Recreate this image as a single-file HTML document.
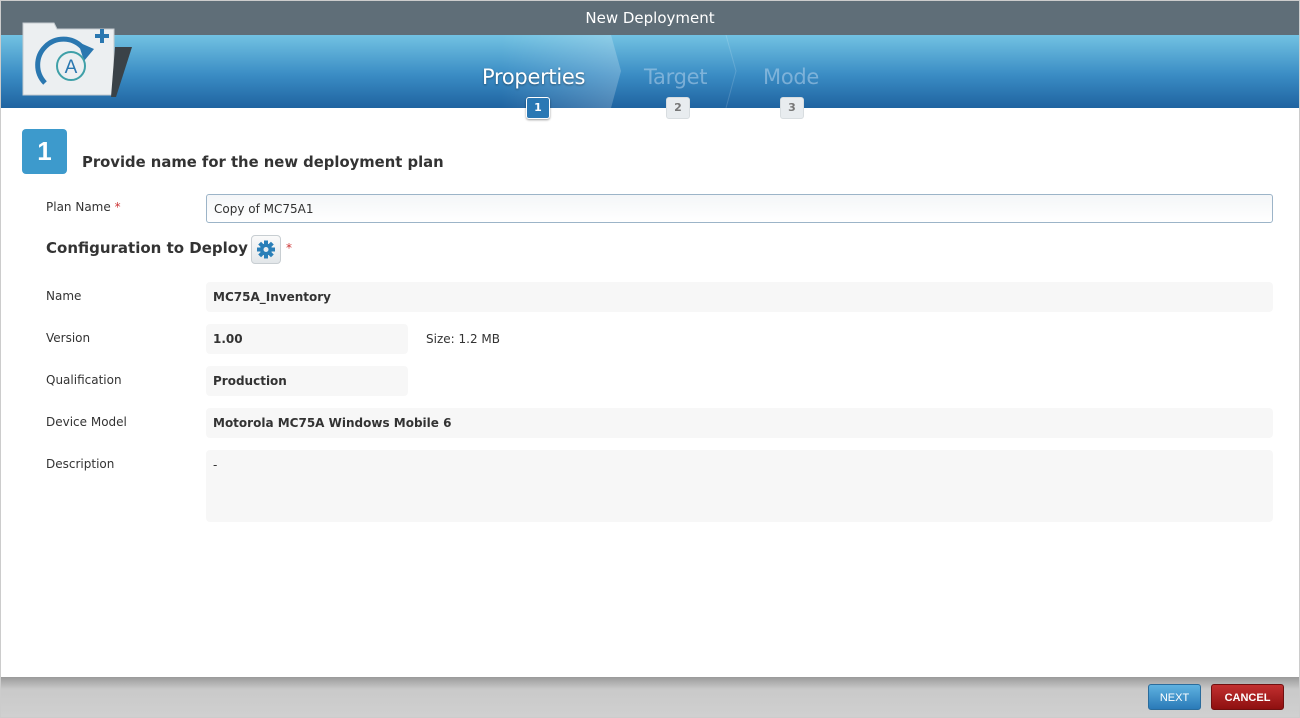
<!DOCTYPE html>
<html><head><meta charset="utf-8"><style>
*{box-sizing:border-box;margin:0;padding:0}
body{width:1300px;height:718px;overflow:hidden;background:#fff;font-family:"DejaVu Sans","Liberation Sans",sans-serif;position:relative}
.frame{position:absolute;left:0;top:0;width:1300px;height:718px;border:1px solid #ccc}
.title{position:absolute;left:1px;top:1px;width:1298px;height:34px;background:#5f6e78;color:#fff;text-align:center;font-size:15px;line-height:34px}
.banner{position:absolute;left:1px;top:35px;width:1298px;height:73px;background:linear-gradient(#72c2e2,#3a8cc4 55%,#1f63a0)}
.step{position:absolute;top:30px;font-size:21px;color:#fff;text-shadow:0 1px 2px rgba(0,0,0,.4);letter-spacing:-0.3px}
.step.off{color:rgba(180,210,235,.55);text-shadow:none}
.num{position:absolute;top:97px;width:24px;height:22px;border-radius:3px;font-size:11px;text-align:center;line-height:20px;font-weight:bold}
.num.on{background:#2a78b4;color:#fff;border:1px solid #fff;box-shadow:0 1px 2px rgba(0,0,0,.4)}
.num.off{background:#e8ecef;color:#777;border:1px solid #d8dde0}
.lbl{position:absolute;left:46px;font-size:12px;color:#333}
.val{position:absolute;left:206px;height:30px;background:#f7f7f7;border-radius:4px;font-size:12px;font-weight:bold;color:#333;padding:8px 7px}
.req{color:#c33}
.footer{position:absolute;left:1px;top:677px;width:1298px;height:40px;background:linear-gradient(#9a9a9a,#c9c9c9 30%,#d0d0d0)}
.btn{position:absolute;top:684px;height:26px;border-radius:3px;color:#fff;font-size:11px;text-align:center;line-height:26px;font-family:"Liberation Sans",sans-serif}
</style></head><body>
<div class="frame"></div>
<div class="title">New Deployment</div>
<div class="banner">
 <svg style="position:absolute;left:15px;top:-18px" width="120" height="82" viewBox="0 0 120 82">
  <path d="M7 6 H38 L41 12 H98 V78 H7 Z" fill="#eceff1" stroke="#c5cbcf"/>
  <path d="M99 30 H116 L100 80 H95 Z" fill="#3a4248"/>
  <path d="M29 66 A24 24 0 1 1 66 30" fill="none" stroke="#2a77b0" stroke-width="5"/>
  <path d="M62 25 L78 32 L68 44 Z" fill="#2a77b0"/>
  <circle cx="55" cy="49" r="14" fill="none" stroke="#3fa0a8" stroke-width="2"/>
  <text x="55" y="56" font-size="19" fill="#2a77b0" text-anchor="middle" font-family="Liberation Sans">A</text>
  <path d="M86 12 V26 M79 19 H93" stroke="#2a77b0" stroke-width="4"/>
 </svg>
 <svg style="position:absolute;left:440px;top:0" width="400" height="73"><defs><linearGradient id="g" x1="0" x2="1"><stop offset="0" stop-color="#fff" stop-opacity="0"/><stop offset="1" stop-color="#fff" stop-opacity=".22"/></linearGradient></defs><path d="M60 0 H170 L180 36 L170 73 H60Z" fill="url(#g)"/><path d="M285 0 L295 36 L285 73" stroke="rgba(255,255,255,.15)" fill="none"/></svg>
 <div class="step" style="left:481px">Properties</div>
 <div class="step off" style="left:643px">Target</div>
 <div class="step off" style="left:762px">Mode</div>
</div>
<div class="num on" style="left:526px">1</div>
<div class="num off" style="left:666px">2</div>
<div class="num off" style="left:780px">3</div>

<div style="position:absolute;left:22px;top:129px;width:45px;height:45px;background:#3d9acc;border-radius:4px;color:#fff;font-size:26px;text-align:center;line-height:45px;font-family:'Liberation Sans',sans-serif;font-weight:bold">1</div>
<div style="position:absolute;left:82px;top:154px;font-size:14.8px;color:#333;font-weight:bold">Provide name for the new deployment plan</div>

<div class="lbl" style="top:200px">Plan Name <span class="req">*</span></div>
<div style="position:absolute;left:206px;top:194px;width:1067px;height:29px;border:1px solid #9cb4c8;border-radius:3px;background:linear-gradient(#f4f6f8,#fff);font-size:12px;color:#333;padding:7px 7px">Copy of MC75A1</div>

<div style="position:absolute;left:46px;top:239px;font-size:15px;font-weight:bold;color:#333">Configuration to Deploy</div>
<div style="position:absolute;left:251px;top:235px;width:30px;height:29px;border:1px solid #c8ced2;border-radius:4px;background:linear-gradient(#fafafa,#e2e6e9)"><svg width="28" height="27" viewBox="0 0 28 27"><g transform="translate(14 13.5)" fill="#2a7fb8"><circle r="6"/><rect x="-2" y="-9" width="4" height="18"/><rect x="-2" y="-9" width="4" height="18" transform="rotate(45)"/><rect x="-2" y="-9" width="4" height="18" transform="rotate(90)"/><rect x="-2" y="-9" width="4" height="18" transform="rotate(135)"/><circle r="2.5" fill="#e8ecef"/></g></svg></div>
<div style="position:absolute;left:286px;top:241px;font-size:12px" class="req">*</div>

<div class="lbl" style="top:289px">Name</div>
<div class="val" style="top:282px;width:1067px">MC75A_Inventory</div>
<div class="lbl" style="top:331px">Version</div>
<div class="val" style="top:324px;width:202px">1.00</div>
<div style="position:absolute;left:426px;top:332px;font-size:12px;color:#333">Size: 1.2 MB</div>
<div class="lbl" style="top:373px">Qualification</div>
<div class="val" style="top:366px;width:202px">Production</div>
<div class="lbl" style="top:415px">Device Model</div>
<div class="val" style="top:408px;width:1067px">Motorola MC75A Windows Mobile 6</div>
<div class="lbl" style="top:457px">Description</div>
<div class="val" style="top:450px;width:1067px;height:72px;font-weight:normal">-</div>

<div class="footer"></div>
<div class="btn" style="left:1148px;width:53px;background:linear-gradient(#5fb2e0,#2a7ab8);border:1px solid #2a6c9c">NEXT</div>
<div class="btn" style="left:1211px;width:73px;background:linear-gradient(#c23030,#8e1010);border:1px solid #701010;font-weight:bold">CANCEL</div>
</body></html>
